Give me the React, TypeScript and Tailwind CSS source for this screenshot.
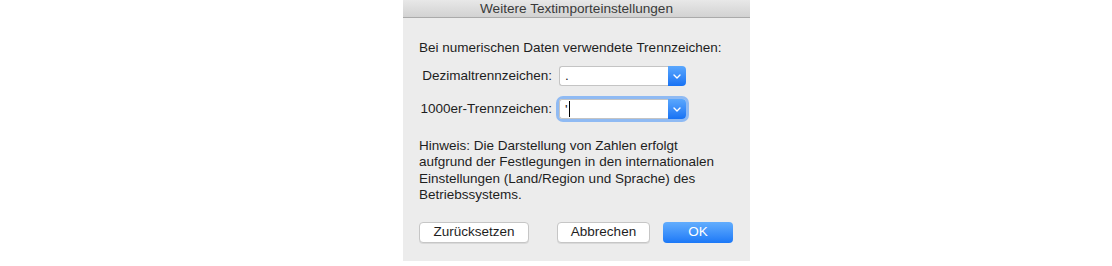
import React from "react";

function Chevron() {
  return (
    <svg width="8" height="5" viewBox="0 0 8 5" fill="none">
      <path d="M1 1 L4 4 L7 1" stroke="white" strokeWidth="1.4" strokeLinecap="round" strokeLinejoin="round" />
    </svg>
  );
}

function Combo({ value, focused }: { value: string; focused?: boolean }) {
  return (
    <div
      className={
        "flex h-[20px] w-[127px] rounded-[4px] " +
        (focused ? "ring-[3px] ring-[#8fbaf3]" : "")
      }
    >
      <div className="flex flex-1 items-center rounded-l-[3px] border border-r-0 border-[#c4c4c4] bg-white pl-[5px] text-[13.5px] leading-none text-[#222]">
        <span>{value}</span>
        {focused && <span className="ml-[1px] h-[16px] w-[1px] bg-black" />}
      </div>
      <div className="flex w-[18px] items-center justify-center rounded-r-[4px] bg-gradient-to-b from-[#5aa7fd] to-[#1672f4]">
        <Chevron />
      </div>
    </div>
  );
}

export default function App() {
  return (
    <div
      className="h-[266px] w-[1112px] bg-white"
      style={{ fontFamily: '"Liberation Sans", Arial, sans-serif' }}
    >
      <div className="ml-[403px] flex h-[261px] w-[347px] flex-col bg-[#ececec] text-[13.5px] text-[#1e1e1e]">
        <div className="flex h-[18px] items-center justify-center border-b border-[#aaaaaa] bg-gradient-to-b from-[#e8e8e8] to-[#d2d2d2] text-[13.6px] leading-none text-[#3a3a3a]">
          Weitere Textimporteinstellungen
        </div>
        <div className="flex flex-col pl-[16px]">
          <div className="mt-[22px] leading-[16px]">Bei numerischen Daten verwendete Trennzeichen:</div>
          <div className="mt-[10px] flex items-center">
            <div className="w-[140px] pr-[7px] text-right">Dezimaltrennzeichen:</div>
            <Combo value="." />
          </div>
          <div className="mt-[13px] flex items-center">
            <div className="w-[140px] pr-[7px] text-right">1000er-Trennzeichen:</div>
            <Combo value="'" focused />
          </div>
          <div className="mt-[18px] leading-[16.5px]">
            Hinweis: Die Darstellung von Zahlen erfolgt
            <br />
            aufgrund der Festlegungen in den internationalen
            <br />
            Einstellungen (Land/Region und Sprache) des
            <br />
            Betriebssystems.
          </div>
          <div className="mt-[18px] flex items-center">
            <button className="h-[21px] w-[110px] rounded-[4px] border border-[#c6c6c6] bg-white text-[13.5px] leading-none text-[#1e1e1e] shadow-[0_1px_0_rgba(0,0,0,0.08)]">
              Zurücksetzen
            </button>
            <button className="ml-[28px] h-[21px] w-[93px] rounded-[4px] border border-[#c6c6c6] bg-white text-[13.5px] leading-none text-[#1e1e1e] shadow-[0_1px_0_rgba(0,0,0,0.08)]">
              Abbrechen
            </button>
            <button className="ml-[13px] h-[21px] w-[70px] rounded-[4px] bg-gradient-to-b from-[#62adfd] to-[#1a78f7] text-[13.5px] leading-none text-white">
              OK
            </button>
          </div>
        </div>
      </div>
    </div>
  );
}
